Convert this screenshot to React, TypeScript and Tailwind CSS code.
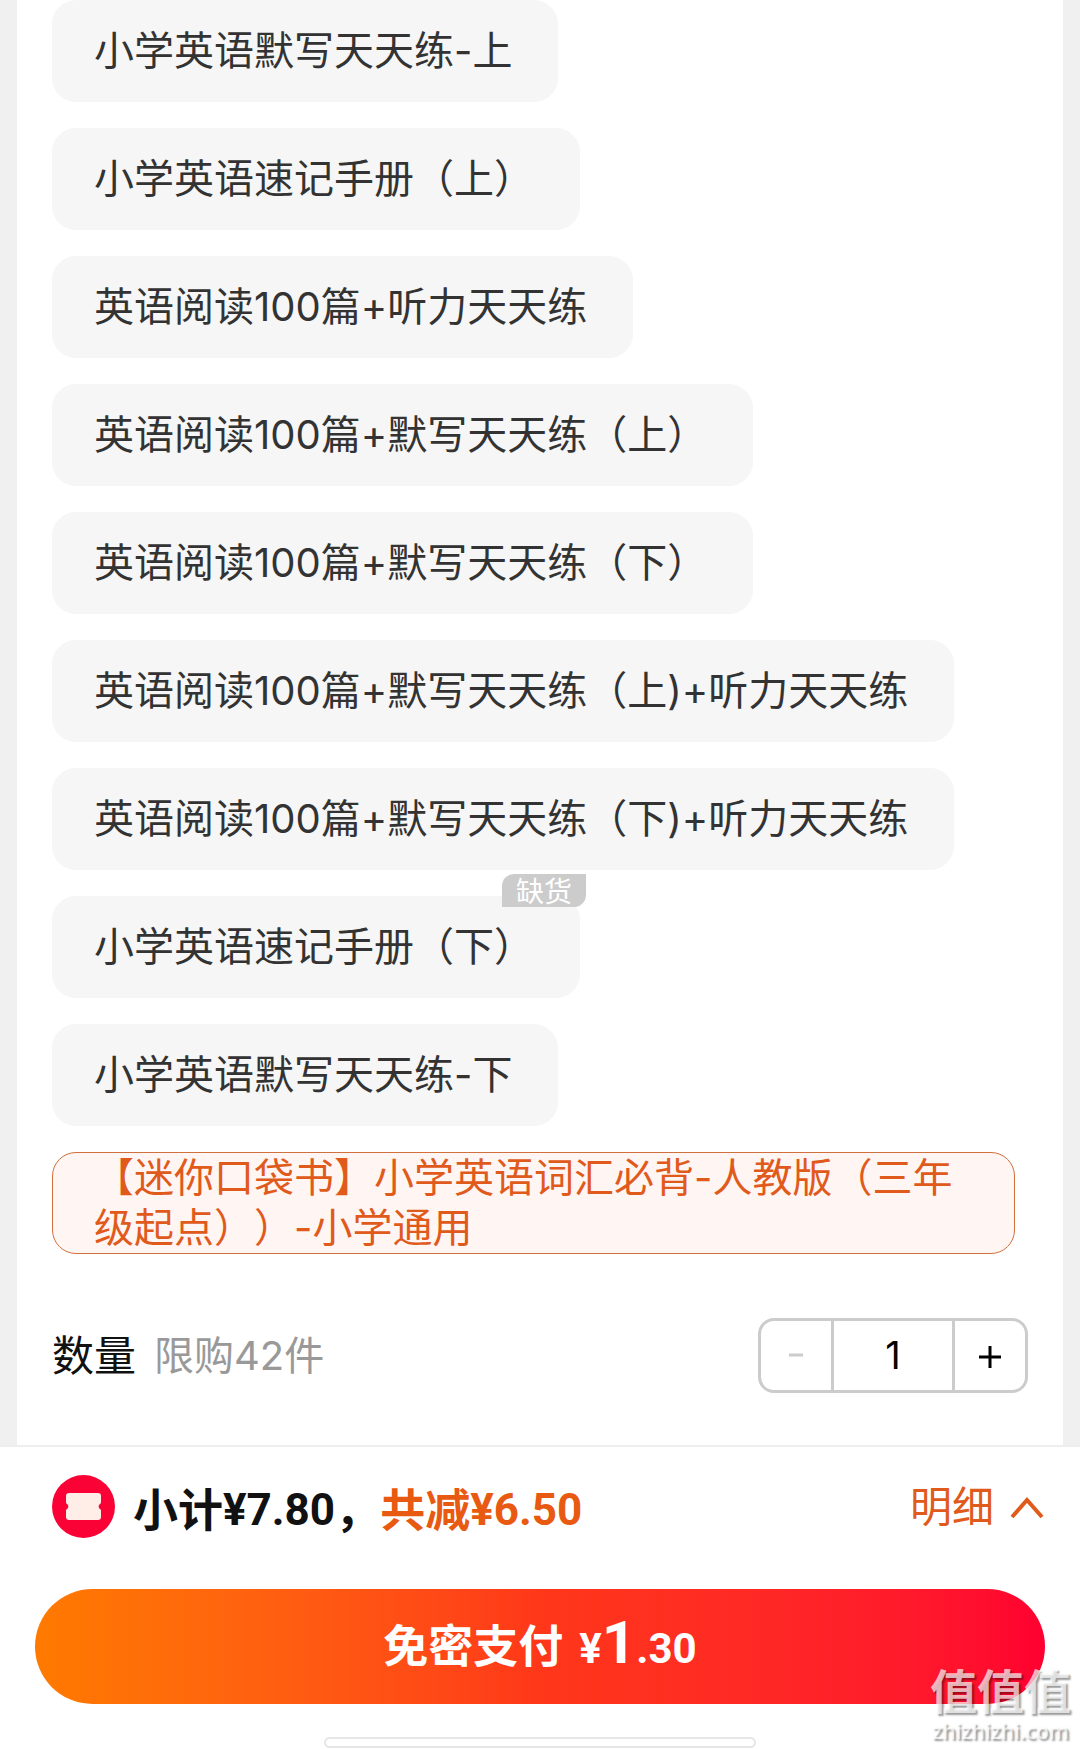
import { useState } from 'react';
import clsx from 'clsx';

interface Option {
  name: string;
  soldOut?: boolean;
}

const OPTIONS: Option[] = [
  { name: '小学英语默写天天练-上' },
  { name: '小学英语速记手册（上）' },
  { name: '英语阅读100篇+听力天天练' },
  { name: '英语阅读100篇+默写天天练（上）' },
  { name: '英语阅读100篇+默写天天练（下）' },
  { name: '英语阅读100篇+默写天天练（上)+听力天天练' },
  { name: '英语阅读100篇+默写天天练（下)+听力天天练' },
  { name: '小学英语速记手册（下）', soldOut: true },
  { name: '小学英语默写天天练-下' },
  { name: '【迷你口袋书】小学英语词汇必背-人教版（三年级起点））-小学通用' },
];

const LIMIT = 42;

export default function App() {
  const [selected, setSelected] = useState(OPTIONS.length - 1);
  const [quantity, setQuantity] = useState(1);

  return (
    <div
      lang="zh-CN"
      className="relative bg-[#f0f0f0] font-['Inter','Noto_Sans_CJK_SC',sans-serif] [text-spacing-trim:space-all]"
    >
      <main className="mx-[17px] bg-white pl-[35px] pr-[35px] pb-[52px]">
        <div className="flex flex-col items-start gap-[26px] pr-[13px]">
          {OPTIONS.map((option, i) => (
            <OptionChip
              key={option.name}
              option={option}
              active={i === selected}
              onSelect={() => setSelected(i)}
            />
          ))}
        </div>

        <div className="mt-16 flex items-center">
          <label htmlFor="quantity" className="text-[42px] leading-none text-[#111]">数量</label>
          <span className="ml-[18px] text-[40px] leading-none text-[#999]">限购{LIMIT}件</span>
          <Stepper value={quantity} onChange={setQuantity} />
        </div>
      </main>

      <footer className="border-t-2 border-[#eee] bg-white pt-7">
        <div className="flex items-center pl-[52px] pr-9">
          <CouponIcon />
          <p className="ml-[18px] flex items-center pt-2 text-[45px] font-bold leading-[55px] text-[#111]">
            小计<Amount>¥7.80</Amount>，
            <span className="flex items-center text-[#e85a12]">
              共减<Amount>¥6.50</Amount>
            </span>
          </p>
          <button className="ml-auto flex items-center gap-4 text-[42px] leading-none text-[#e05a1c]">
            明细
            <svg width="34" height="24" viewBox="0 0 34 24" fill="none" stroke="currentColor" strokeWidth="4">
              <path d="M2 22 17 5l15 17" />
            </svg>
          </button>
        </div>

        <div className="px-[35px] pt-[51px]">
          <button className="flex h-[115px] w-full items-center justify-center rounded-full bg-linear-to-r from-[#ff7a00] via-[#ff3719] to-[#ff0030] text-[45px] font-bold text-white">
            免密支付
            <span className="ml-4 flex items-baseline font-['Roboto',sans-serif] text-[42px]">
              ¥<span className="text-[60px] leading-none">1</span>.30
            </span>
          </button>
        </div>

        {/* home indicator */}
        <div className="pt-[33px] pb-px">
          <div className="mx-auto h-[11px] w-2/5 rounded-full border-2 border-[#e6e6e6] bg-white" />
        </div>
      </footer>

      <Watermark />
    </div>
  );
}

function OptionChip({ option, active, onSelect }: {
  option: Option;
  active: boolean;
  onSelect: () => void;
}) {
  return (
    <button
      onClick={onSelect}
      aria-pressed={active}
      className={clsx(
        'relative min-h-[102px] rounded-3xl border pl-[41px] pr-[45px] text-left text-[40px] leading-[50px]',
        active ? 'border-[#d0703c] bg-[#fff5f2] text-[#e05a1c]' : 'border-[#f6f6f6] bg-[#f6f6f6] text-[#333]',
      )}
    >
      {option.name}
      {option.soldOut && (
        <span className="absolute -top-[23px] -right-[7px] h-[33px] rounded-tl-xl rounded-br-xl bg-[#ccc] px-[14px] text-[28px] leading-[37px] text-white">
          缺货
        </span>
      )}
    </button>
  );
}

function Stepper({ value, onChange }: { value: number; onChange: (v: number) => void }) {
  return (
    <div className="ml-auto flex h-[75px] items-stretch overflow-hidden rounded-2xl border-3 border-[#ccc]">
      <button
        aria-label="减少"
        disabled={value <= 1}
        onClick={() => onChange(value - 1)}
        className="flex w-[70px] items-center justify-center text-black disabled:text-[#ccc]"
      >
        <svg width="14" height="24" viewBox="0 0 14 24" stroke="currentColor" strokeWidth="3">
          <path d="M0 11h14" />
        </svg>
      </button>
      <input
        id="quantity"
        inputMode="numeric"
        value={value}
        onChange={(e) => onChange(Math.min(LIMIT, Math.max(1, Number(e.target.value) || 1)))}
        className="w-[124px] border-x-3 border-[#ccc] text-center text-[38px] text-black outline-none"
      />
      <button
        aria-label="增加"
        disabled={value >= LIMIT}
        onClick={() => onChange(value + 1)}
        className="flex w-[70px] items-center justify-center text-black disabled:text-[#ccc]"
      >
        <svg width="22" height="24" viewBox="0 0 22 24" stroke="currentColor" strokeWidth="3">
          <path d="M0 13h22M11 2v22" />
        </svg>
      </button>
    </div>
  );
}

function Amount({ children }: { children: string }) {
  return <span className="font-['Roboto',sans-serif] text-[44px]">{children}</span>;
}

function CouponIcon() {
  return (
    <svg width="63" height="63" viewBox="0 0 63 63">
      <circle cx="31.5" cy="31.5" r="31.5" fill="#fb0236" />
      <path
        d="M17 18h29a3 3 0 0 1 3 3v6a2 2 0 0 1-1 2 3 3 0 0 0 0 5 2 2 0 0 1 1 2v6a3 3 0 0 1-3 3H17a3 3 0 0 1-3-3v-6a2 2 0 0 1 1-2 3 3 0 0 0 0-5 2 2 0 0 1-1-2v-6a3 3 0 0 1 3-3z"
        fill="#ffeee8"
      />
    </svg>
  );
}

function Watermark() {
  return (
    <div className="pointer-events-none absolute right-[9px] bottom-1 flex flex-col items-center text-white/70 [text-shadow:2px_2px_2px_rgba(0,0,0,0.4)]">
      <span className="text-[47px] font-bold leading-[50px]">值值值</span>
      <span className="font-['Open_Sans',sans-serif] text-[21px] font-semibold leading-7">zhizhizhi.com</span>
    </div>
  );
}
